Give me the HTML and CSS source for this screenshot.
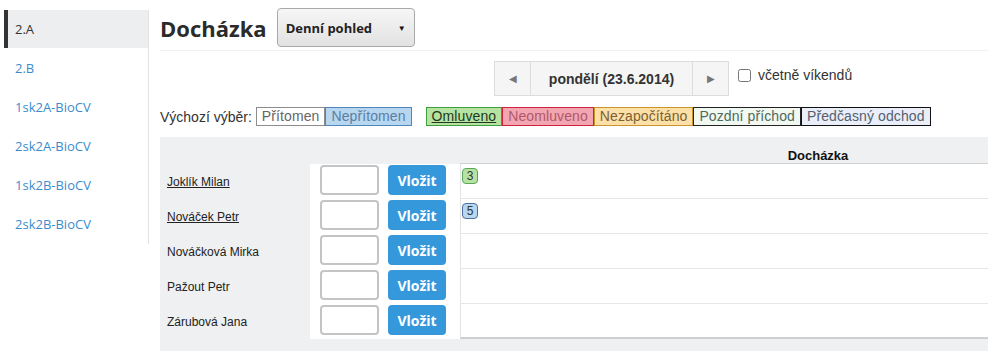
FILE: index.html
```html
<!DOCTYPE html>
<html lang="cs">
<head>
  <meta charset="UTF-8" />
  <title>Docházka</title>
  <link rel="stylesheet" href="styles.css">
</head>
<body>
  <div class="layout">
    <ul class="sidebar">
      <li class="active"><a href="#">2.A</a></li>
      <li><a href="#">2.B</a></li>
      <li><a href="#">1sk2A-BioCV</a></li>
      <li><a href="#">2sk2A-BioCV</a></li>
      <li><a href="#">1sk2B-BioCV</a></li>
      <li><a href="#">2sk2B-BioCV</a></li>
    </ul>

    <div class="main">
      <div class="page-head">
        <h1>Docházka</h1>
        <div class="fake-select">Denní pohled <span class="caret">▼</span></div>
      </div>

      <div class="day-nav">
        <div class="pager">
          <span class="arrow">◀</span>
          <span class="day">pondělí (23.6.2014)</span>
          <span class="arrow">▶</span>
        </div>
        <label class="weekend"><input type="checkbox"> včetně víkendů</label>
      </div>

      <div class="legend">
        <span class="legend-label">Výchozí výběr:</span>
        <span class="tag tag-present">Přítomen</span>
        <span class="tag tag-absent">Nepřítomen</span>
        <span class="tag tag-excused">Omluveno</span>
        <span class="tag tag-unexcused">Neomluveno</span>
        <span class="tag tag-ignored">Nezapočítáno</span>
        <span class="tag tag-late">Pozdní příchod</span>
        <span class="tag tag-early">Předčasný odchod</span>
      </div>

      <div class="sheet">
        <div class="sheet-row sheet-head">
          <div></div>
          <div></div>
          <div class="col-att">Docházka</div>
        </div>

        <div class="sheet-row">
          <div class="col-name"><a href="#">Joklík Milan</a></div>
          <div class="col-input"><input type="text" class="hours"><button>Vložit</button></div>
          <div class="col-att"><span class="badge badge-excused">3</span></div>
        </div>
        <div class="sheet-row">
          <div class="col-name"><a href="#">Nováček Petr</a></div>
          <div class="col-input"><input type="text" class="hours"><button>Vložit</button></div>
          <div class="col-att"><span class="badge badge-absent">5</span></div>
        </div>
        <div class="sheet-row">
          <div class="col-name">Nováčková Mirka</div>
          <div class="col-input"><input type="text" class="hours"><button>Vložit</button></div>
          <div class="col-att"></div>
        </div>
        <div class="sheet-row">
          <div class="col-name">Pažout Petr</div>
          <div class="col-input"><input type="text" class="hours"><button>Vložit</button></div>
          <div class="col-att"></div>
        </div>
        <div class="sheet-row last">
          <div class="col-name">Zárubová Jana</div>
          <div class="col-input"><input type="text" class="hours"><button>Vložit</button></div>
          <div class="col-att"></div>
        </div>
      </div>
    </div>
  </div>
</body>
</html>
```

FILE: styles.css
```css
html, body {
  overflow: hidden;
}
body {
  margin: 0;
  font-family: "Liberation Sans", Arial, sans-serif;
  color: #333;
  background: #fff;
}
.layout {
  display: flex;
  align-items: flex-start;
}

/* levý panel se třídami */
.sidebar {
  list-style: none;
  margin: 10px 0 0 4px;
  padding: 0;
  width: 144px;
  flex: none;
  border-right: 1px solid #e3e3e3;
  font-family: "Open Sans", sans-serif;
  font-size: 13px;
}
.sidebar li {
  border-left: 4px solid transparent;
  padding: 10px 7px;
  line-height: 18px;
  margin-bottom: 1px;
}
.sidebar li a {
  color: #3b8ccc;
  text-decoration: none;
}
.sidebar li.active {
  border-left-color: #333;
  background-color: #eceeef;
}
.sidebar li.active a {
  color: #333;
}

.main {
  margin-left: 11px;
  padding-top: 8px;
  flex: none;
  width: 1016px;
}

.page-head {
  display: flex;
  align-items: center;
  gap: 10px;
  padding-bottom: 3px;
  border-bottom: 1px solid #f0f0f0;
}
h1 {
  margin: 0;
  font-family: "Open Sans", sans-serif;
  font-size: 22px;
  font-weight: 700;
  color: #2b2b2b;
}
.fake-select {
  width: 138px;
  height: 39px;
  box-sizing: border-box;
  border: 1px solid #a9a9a9;
  border-radius: 4px;
  background: linear-gradient(#f6f6f6, #e2e2e2);
  display: flex;
  align-items: center;
  padding: 0 8px;
  font-family: "Open Sans", sans-serif;
  font-size: 13px;
  font-weight: 700;
  color: #222;
}
.fake-select .caret {
  margin-left: auto;
  font-size: 8px;
  color: #111;
}

.day-nav {
  display: flex;
  align-items: center;
  margin: 10px 0 0 334px;
}
.pager {
  display: flex;
  height: 35px;
  box-sizing: border-box;
  border: 1px solid #dcdcdc;
  background: #f5f5f5;
}
.pager span {
  display: flex;
  align-items: center;
  justify-content: center;
}
.pager .arrow {
  width: 35px;
  font-size: 10px;
  color: #777;
}
.pager .day {
  width: 161px;
  border-left: 1px solid #dcdcdc;
  border-right: 1px solid #dcdcdc;
  font-weight: 700;
  font-size: 14px;
  color: #333;
}
.weekend {
  display: flex;
  align-items: center;
  margin-left: 9px;
  margin-top: -7px;
  font-size: 14px;
  color: #333;
}
.weekend input {
  margin: 0 7px 0 0;
  width: 13px;
  height: 13px;
}

.legend {
  display: flex;
  align-items: center;
  margin-top: 11px;
  font-size: 14px;
}
.legend-label {
  margin-right: 4px;
  color: #333;
}
.tag {
  border: 1px solid #999;
  padding: 0 5px;
  line-height: 17px;
  letter-spacing: 0.1px;
  color: #666;
}
.tag-present { background: #fff; border-color: #8c8c8c; }
.tag-absent { background: #b7d6f0; border-color: #4e86bb; color: #5a7ea4; }
.tag-excused {
  margin-left: 14px;
  background: #b6e3a1;
  border-color: #3e9f3e;
  color: #1e3a1e;
  text-decoration: underline;
}
.tag-unexcused { background: #f2a6b1; border-color: #cf2139; color: #b1566a; }
.tag-ignored { background: #fddfa8; border-color: #c8962a; color: #7b6232; }
.tag-late { background: #f1f8f1; border-color: #222; color: #4e6a5c; }
.tag-early { background: #e9eef8; border-color: #111; color: #556070; }

/* tabulka docházky */
.sheet {
  margin-top: 11px;
  background: #eef0f1;
  padding-bottom: 12px;
}
.sheet-row {
  display: grid;
  grid-template-columns: 150px 150px 1fr;
  height: 35px;
}
.sheet-head {
  height: 27px;
}
.sheet-head .col-att {
  background: #eef0f1;
  border-left: none;
  border-bottom: 2px solid #cfd1d2;
  text-align: center;
  font-weight: 700;
  font-size: 13px;
  color: #111;
  padding-top: 11px;
  box-sizing: border-box;
  padding-left: 0;
}
.col-name {
  display: flex;
  align-items: center;
  padding-left: 7px;
  font-size: 12px;
  color: #222;
}
.col-name a {
  color: #222;
}
.col-input {
  background: #fff;
  display: flex;
  gap: 9px;
  padding: 1px 0 0 10px;
}
.hours {
  width: 59px;
  height: 30px;
  box-sizing: border-box;
  border: 2px solid #c4c4c4;
  border-radius: 4px;
  margin: 0;
}
.col-input button {
  width: 58px;
  height: 30px;
  border: none;
  border-radius: 4px;
  background-color: #3498db;
  color: #fff;
  font-family: "Open Sans", sans-serif;
  font-weight: 700;
  font-size: 14px;
  cursor: pointer;
  padding: 0;
}
.col-att {
  background: #fff;
  border-left: 1px solid #e3e3e3;
  border-bottom: 1px solid #e6e6e6;
  padding: 2px 0 0 1px;
}
.sheet-row.last .col-att {
  border-bottom: 2px solid #cfcfcf;
}
.badge {
  display: inline-block;
  width: 16px;
  height: 16px;
  box-sizing: border-box;
  border-radius: 4px;
  font-size: 12px;
  line-height: 14px;
  text-align: center;
  color: #333;
}
.badge-excused { background: #b6e3a1; border: 1px solid #5aa55a; }
.badge-absent { background: #b7d6f0; border: 1px solid #4e6f9b; }
```
